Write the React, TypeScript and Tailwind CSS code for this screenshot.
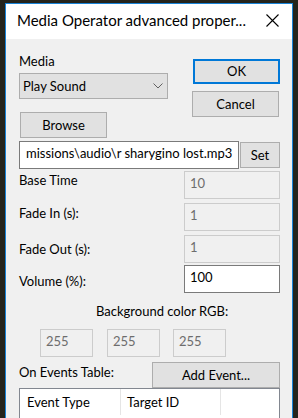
import React from "react";

function DisabledBox({ value, className = "" }: { value: string; className?: string }) {
  return (
    <div
      className={`h-[28px] border border-[#cccccc] bg-[#f0f0f0] pl-[5px] text-[13px] leading-[23px] text-[#6d6d6d] ${className}`}
    >
      {value}
    </div>
  );
}

function Btn({ children, className = "" }: { children: React.ReactNode; className?: string }) {
  return (
    <div
      className={`flex items-center justify-center border border-[#adadad] bg-[#e1e1e1] text-[13px] text-black ${className}`}
    >
      {children}
    </div>
  );
}

export default function App() {
  return (
    <div className="relative h-[418px] w-[298px] overflow-hidden bg-[#25241c] pl-[5px] pt-[3px] font-['Lato','Liberation_Sans',sans-serif]">
      <div className="h-[420px] w-[288px] border-l border-r border-t border-[#1883d7] bg-[#f0f0f0]">
        {/* Title bar */}
        <div className="flex h-[35px] items-start justify-between bg-white">
          <div className="whitespace-nowrap pl-[11px] pt-[5px] text-[15px] leading-[22px] text-black">
            Media Operator advanced proper...
          </div>
          <svg width="13" height="13" viewBox="0 0 13 13" className="mr-[13px] mt-[10px] shrink-0">
            <path d="M0.5 0.5 L12.5 12.5 M12.5 0.5 L0.5 12.5" stroke="#000" strokeWidth="1.1" />
          </svg>
        </div>

        {/* Body */}
        <div className="pl-[13px] pr-[12px] text-[13px] leading-[17px] text-black">
          <div className="flex justify-between">
            <div className="w-[149px] pt-[14px]">
              <div>Media</div>
              <div className="mt-[3px] flex h-[26px] items-center justify-between border border-[#adadad] bg-[#e1e1e1] pl-[3px] pr-[4px]">
                <span>Play Sound</span>
                <svg width="10" height="6" viewBox="0 0 10 6">
                  <path d="M0.5 0.5 L5 5 L9.5 0.5" stroke="#606060" strokeWidth="1" fill="none" />
                </svg>
              </div>
              <Btn className="ml-[1px] mt-[13px] h-[26px] w-[87px]">Browse</Btn>
            </div>
            <div className="w-[88px] pt-[20px]">
              <div className="ml-[1px] flex h-[25px] w-[87px] items-center justify-center border-2 border-[#0078d7] bg-[#e1e1e1]">
                OK
              </div>
              <Btn className="mt-[7px] h-[26px] w-[87px]">Cancel</Btn>
            </div>
          </div>

          <div className="mt-[3px] flex items-start">
            <div className="h-[28px] w-[220px] whitespace-nowrap border border-[#7a7a7a] bg-white pl-[6px] leading-[22px]">
              missions\audio\r sharygino lost.mp3
            </div>
            <Btn className="ml-[1px] mt-[1px] h-[26px] w-[40px]">Set</Btn>
          </div>

          <div className="mt-[2px] flex items-start justify-between">
            <div className="mt-[1px]">Base Time</div>
            <DisabledBox value="10" className="w-[96px]" />
          </div>
          <div className="mt-[4px] flex items-start justify-between">
            <div className="mt-[2px]">Fade In (s):</div>
            <DisabledBox value="1" className="w-[96px]" />
          </div>
          <div className="mt-[4px] flex items-start justify-between">
            <div className="mt-[6px]">Fade Out (s):</div>
            <DisabledBox value="1" className="w-[96px]" />
          </div>
          <div className="mt-[2px] flex items-start justify-between">
            <div className="mt-[8px]">Volume (%):</div>
            <div className="h-[28px] w-[96px] border border-[#7a7a7a] bg-white pl-[5px] leading-[22px]">100</div>
          </div>

          <div className="mt-[10px] pl-[77px]">Background color RGB:</div>
          <div className="mt-[9px] flex pl-[21px]">
            <DisabledBox value="255" className="w-[53px]" />
            <DisabledBox value="255" className="ml-[14px] w-[53px]" />
            <DisabledBox value="255" className="ml-[13px] w-[53px]" />
          </div>

          <div className="mt-[5px] flex items-start justify-between">
            <div className="mt-[2px]">On Events Table:</div>
            <Btn className="h-[26px] w-[128px]">Add Event...</Btn>
          </div>
          <div className="h-[40px] border border-[#828790] bg-white">
            <div className="flex h-[26px]">
              <div className="w-[101px] border-r border-[#e5e5e5] pl-[7px] pt-[5px]">Event Type</div>
              <div className="w-[100px] border-r border-[#e5e5e5] pl-[6px] pt-[5px]">Target ID</div>
              <div className="flex-1" />
            </div>
          </div>
        </div>
      </div>
    </div>
  );
}
